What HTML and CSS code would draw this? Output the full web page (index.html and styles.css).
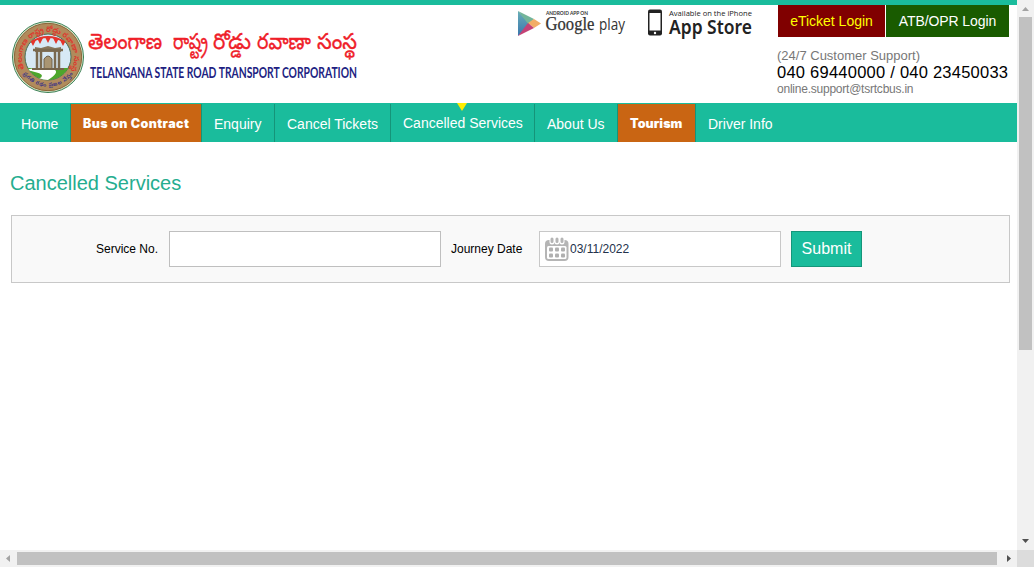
FILE: index.html
```html
<!DOCTYPE html>
<html lang="en">
<head>
<meta charset="utf-8">
<title>Cancelled Services</title>
<link rel="stylesheet" href="styles.css">
</head>
<body>
<div class="window">
  <div class="page">
    <header class="header">
      <svg class="brand" width="360" height="98" viewBox="0 5 360 98">
        <defs>
          <path id="arcTop" d="M24.500 69 A26 26 0 1 1 71.500 69"/>
          <path id="arcBottom" d="M22 72 A30.500 30.500 0 0 0 74 72"/>
          <clipPath id="sealInner"><circle cx="48" cy="57" r="23"/></clipPath>
        </defs>
        <circle cx="48" cy="57" r="35.500" fill="#d9e5c9" stroke="#3a8055" stroke-width="1"/>
        <circle cx="48" cy="57" r="33.700" fill="#b18b5c" stroke="#896437" stroke-width="1"/>
        <circle cx="48" cy="57" r="23" fill="#d7e9f5" stroke="#47715a" stroke-width="1"/>
        <g clip-path="url(#sealInner)">
          <path d="M24 68H72V82H24Z" fill="#4da62c"/>
          <path d="M25 70Q43 65 55 70Q59 73 48 80H36Q52 74 25 70Z" fill="#fff"/>
          <path d="M31 42Q48 32 65 42" fill="none" stroke="#e3352c" stroke-width="2"/>
          <g fill="#e3352c"><path d="M30 40h6l-3 6ZM37 38h6l-3 6ZM45 37h6l-3 6ZM53 38h6l-3 6ZM60 40h6l-3 6Z"/></g>
          <path d="M35 47L41 48L48 46L55 48L61 47V52H35Z" fill="#88765b"/>
          <path d="M33 50H63M37 50V68M41 50V68M55 50V68M59 50V68" stroke="#79694f" stroke-width="2.500"/>
          <path d="M44 69V59Q48 53 52 59V69" fill="#a99572" stroke="#6e604a"/>
          <path d="M32 69H64" stroke="#75644b" stroke-width="2"/>
        </g>
        <text class="seal-top"><textPath href="#arcTop" textLength="106">తెలంగాణ రాష్ట్ర రోడ్డు రవాణా సంస్థ</textPath></text>
        <text class="seal-bottom"><textPath href="#arcBottom" startOffset="2" textLength="58">ప్రగతి రథం ప్రజల నేస్తం</textPath></text>
        <text class="telugu" x="88" y="49" textLength="74" lengthAdjust="spacingAndGlyphs">తెలంగాణ</text>
        <text class="telugu" x="173" y="49" textLength="35" lengthAdjust="spacingAndGlyphs">రాష్ట్ర</text>
        <text class="telugu" x="213" y="49" textLength="38" lengthAdjust="spacingAndGlyphs">రోడ్డు</text>
        <text class="telugu" x="257" y="49" textLength="54" lengthAdjust="spacingAndGlyphs">రవాణా</text>
        <text class="telugu" x="317" y="49" textLength="40" lengthAdjust="spacingAndGlyphs">సంస్థ</text>
        <text class="corporation" x="90" y="78" textLength="267" lengthAdjust="spacingAndGlyphs">TELANGANA STATE ROAD TRANSPORT CORPORATION</text>
      </svg>
      <svg class="stores" width="240" height="40" viewBox="516 5 240 40">
        <defs>
          <linearGradient id="playBlue" x2="0" y2="1"><stop stop-color="#69aeb8"/><stop offset="1" stop-color="#3976ad"/></linearGradient>
        </defs>
        <path d="M518 11L530 24L518 36Z" fill="url(#playBlue)"/>
        <path d="M518 11L534 19L529 25Z" fill="#73b59a"/>
        <path d="M534 19L541 23.500L534 28L528 23Z" fill="#f2ad66"/>
        <path d="M518 36L528 23L534 28Z" fill="#c44276"/>
        <text class="android" x="546" y="14.500" textLength="42" lengthAdjust="spacingAndGlyphs">ANDROID APP ON</text>
        <text class="google" x="545.500" y="29.500" textLength="49" lengthAdjust="spacingAndGlyphs">Google</text>
        <text class="play" x="599" y="29.500" textLength="26" lengthAdjust="spacingAndGlyphs">play</text>
        <rect x="648" y="9.500" width="14" height="26" rx="2" fill="#222"/>
        <rect x="649.500" y="13" width="11" height="17.500" fill="#fff"/>
        <circle cx="655" cy="33" r="1.200" fill="#fff"/>
        <text class="available" x="669" y="15.500" textLength="83" lengthAdjust="spacingAndGlyphs">Available on the iPhone</text>
        <text class="appstore" x="669" y="33.500" textLength="83" lengthAdjust="spacingAndGlyphs">App Store</text>
      </svg>
      <div class="account">
        <div class="logins"><a class="login eticket">eTicket Login</a><a class="login operator">ATB/OPR Login</a></div>
        <div class="support">(24/7 Customer Support)</div>
        <div class="phones">040 69440000 / 040 23450033</div>
        <div class="email">online.support@tsrtcbus.in</div>
      </div>
    </header>
    <nav class="nav">
      <a class="tab home">Home</a>
      <a class="tab contract promo"><span>Bus on Contract</span></a>
      <a class="tab enquiry">Enquiry</a>
      <a class="tab tickets">Cancel Tickets</a>
      <a class="tab services active">Cancelled Services</a>
      <a class="tab about">About Us</a>
      <a class="tab tourism promo"><span>Tourism</span></a>
      <a class="tab driver">Driver Info</a>
    </nav>
    <main class="content">
      <h1 class="title">Cancelled Services</h1>
      <form class="search">
        <label class="label" for="service">Service No.</label>
        <input class="service-input" id="service" type="text">
        <span class="label date-label">Journey Date</span>
        <div class="date-input">
          <svg width="24" height="24" viewBox="0 0 24 24">
            <rect x="0" y="3" width="23.500" height="21" rx="4" fill="#b5b5b5"/>
            <rect x="2" y="9" width="19.500" height="13" rx="1.500" fill="#fff"/>
            <path d="M7 2V5M12 2V5M17 2V5" stroke="#fff" stroke-width="5" stroke-linecap="round"/>
            <path d="M7 2V4.500M12 2V4.500M17 2V4.500" stroke="#b5b5b5" stroke-width="3" stroke-linecap="round"/>
            <g fill="#b0b0b0"><rect x="4" y="10.500" width="4" height="4" rx="1"/><rect x="10" y="10.500" width="4" height="4" rx="1"/><rect x="16" y="10.500" width="4" height="4" rx="1"/><rect x="4" y="16.500" width="4" height="4" rx="1"/><rect x="10" y="16.500" width="4" height="4" rx="1"/><rect x="16" y="16.500" width="4" height="4" rx="1"/></g>
          </svg>
          <span>03/11/2022</span>
        </div>
        <button class="submit" type="button">Submit</button>
      </form>
    </main>
  </div>
  <div class="scroll vertical">
    <svg width="17" height="17"><path d="M5 11H12L8.500 7Z" fill="#a3a3a3"/></svg>
    <div class="thumb"></div>
    <svg width="17" height="17"><path d="M5 6H12L8.500 10Z" fill="#505050"/></svg>
  </div>
  <div class="scroll horizontal">
    <svg width="17" height="17"><path d="M10 5V12L6 8.500Z" fill="#a3a3a3"/></svg>
    <div class="thumb"></div>
    <svg width="17" height="17"><path d="M7 5V12L11 8.500Z" fill="#505050"/></svg>
  </div>
  <div class="corner"></div>
</div>
</body>
</html>
```

FILE: styles.css
```css
* { box-sizing: border-box; }
body { margin: 0; overflow: hidden; background: #fff; font-family: "Liberation Sans", Arial, sans-serif; }
svg { display: block; flex: none; overflow: visible; }
.window { display: grid; width: 1034px; height: 567px; grid-template-columns: 1017px 17px; grid-template-rows: 550px 17px; }
.page { overflow: hidden; }
.header { display: flex; height: 103px; border-top: 5px solid #1abc9c; }
.stores { margin-left: 156px; }
.account { margin-left: 21px; padding-left: 1px; }
.logins { display: flex; gap: 1px; }
.login { height: 32px; font-size: 14px; line-height: 32px; text-align: center; white-space: nowrap; }
.eticket { width: 107px; background: #800000; color: #ff0; }
.operator { width: 123px; background: #195b00; color: #fff; letter-spacing: -.1px; }
.support { margin: 10px 0 0 -1px; font-size: 13px; line-height: 17px; color: #777; }
.phones { margin-left: -1px; font-size: 16.500px; letter-spacing: .24px; line-height: 17px; color: #000; white-space: nowrap; }
.email { margin-left: -1px; font-size: 12px; letter-spacing: -.23px; line-height: 17px; color: #777; }
.telugu { font: 22px "Noto Sans Telugu", "Noto Sans", sans-serif; fill: #ef2029; stroke: #ef2029; stroke-width: .35px; }
.seal-top { font: bold 7.500px "Noto Sans Telugu", "Noto Sans", sans-serif; fill: #dc3b2f; }
.seal-bottom { font: bold 5.500px "Noto Sans Telugu", "Noto Sans", sans-serif; fill: #433984; }
.corporation { font: bold 15px Lato, sans-serif; fill: #211e82; }
.android { font: bold 5px Lato, sans-serif; fill: #333; }
.google { font: 18px "Liberation Serif", serif; fill: #333; stroke: #333; stroke-width: .25px; }
.play { font: 17px "Open Sans", sans-serif; fill: #333; }
.available { font: 8px "Open Sans", sans-serif; fill: #222; }
.appstore { font: 600 20px "Noto Sans", sans-serif; fill: #222; }
.nav { display: flex; height: 39px; padding-top: 1px; background: #1abc9c; color: #fff; }
.tab { position: relative; flex: none; height: 38px; padding-left: 12px; border-right: 1px solid #159479; font-size: 14px; line-height: 40px; white-space: nowrap; }
.home { width: 71px; padding-left: 21px; }
.contract { width: 131px; letter-spacing: .42px; }
.enquiry { width: 73px; }
.tickets { width: 116px; }
.services { width: 144px; line-height: 38px; }
.about { width: 83px; }
.tourism { width: 78px; letter-spacing: .1px; }
.driver { border: 0; }
.promo { background: #c96513; font: 900 12.500px/39px Inter, sans-serif; }
.active::before { content: ""; position: absolute; top: -1px; left: 66px; border: 5px solid transparent; border-top: 8px solid #ffed00; border-bottom: 0; }
.content { padding: 0 7px 0 11px; }
.title { margin: 29px 0 19px -1px; font-size: 20px; font-weight: normal; line-height: 25px; color: #25ad8f; }
.search { display: flex; align-items: center; height: 68px; padding-left: 84px; background: #f9f9f9; border: 1px solid #c8c8c8; color: #000; }
.label { width: 73px; font-size: 12px; white-space: nowrap; }
.service-input { width: 272px; height: 36px; margin: 0; padding: 5px; background: #fff; border: 1px solid #bfbfbf; }
.date-label { width: 88px; margin-left: 10px; }
.date-input { display: flex; align-items: center; width: 242px; height: 36px; padding-left: 5px; gap: 1px; background: #fff; border: 1px solid #c8c8c8; font-size: 12px; color: #23324b; }
.submit { width: 71px; height: 36px; margin-left: 10px; padding: 0; background: #1abc9c; border: 1px solid #15967a; color: #fff; font: 16px "Liberation Sans", sans-serif; }
.scroll { display: flex; background: #f1f1f1; }
.vertical { flex-direction: column; justify-content: space-between; }
.vertical .thumb { width: 13px; height: 333px; margin: 0 2px 183px; }
.thumb { background: #c1c1c1; }
.horizontal .thumb { width: 980px; height: 13px; margin: 2px 3px 0 0; }
.corner { background: #dcdcdc; }
```
